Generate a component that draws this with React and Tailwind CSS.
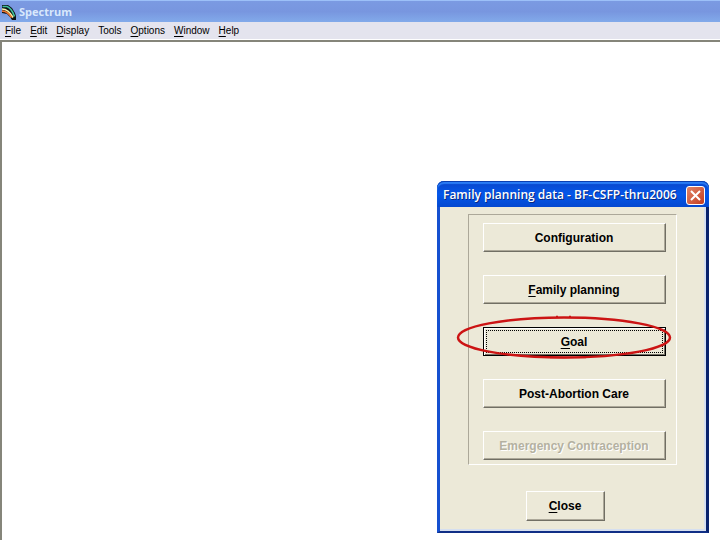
const menus = [
  ['F', 'ile'],
  ['E', 'dit'],
  ['D', 'isplay'],
  ['T', 'ools', true],
  ['O', 'ptions'],
  ['W', 'indow'],
  ['H', 'elp'],
];

const raised =
  "border border-t-white border-l-white border-r-[#716f64] border-b-[#716f64] bg-[#ece9d8] shadow-[inset_-1px_-1px_0_#aca899]";
const label = "font-['Liberation_Sans',Arial,sans-serif] text-[12px] leading-4 font-bold";

function Hot({ first, rest, plain }) {
  return (
    <>
      {plain ? first : <span className="underline underline-offset-2">{first}</span>}
      {rest}
    </>
  );
}

function SpectrumIcon() {
  return (
    <svg width="16" height="16" viewBox="0 0 16 16" fill="none" aria-hidden="true">
      <path d="M1 1H7L11 4L14 9L15 12V16H11L9 13L6 10L1 9Z" fill="#0c1216" />
      <path d="M1.500 2.500H6C10 4 12 8 13.500 12.500" stroke="#3fc09a" strokeWidth="1.7" />
      <path d="M1 5C6 5 9 8 12 13.500" stroke="#f8f4a8" strokeWidth="1.7" />
      <path d="M1 7.200C5 7 8 9.500 10.500 13.500" stroke="#ec7430" strokeWidth="1.7" />
    </svg>
  );
}

function DialogButton({ children, disabled }) {
  return (
    <button
      type="button"
      disabled={disabled}
      className={`${raised} ${label} h-[29px] w-full text-black disabled:text-[#b4b1a1] disabled:[text-shadow:1px_1px_0_#fff]`}
    >
      {children}
    </button>
  );
}

function FamilyPlanningDialog() {
  return (
    <section
      role="dialog"
      aria-labelledby="dialog-title"
      className="absolute top-[181px] right-[11px] flex w-[272px] flex-col rounded-t-[7px] border-x-3 border-b-2 border-l-[#1650d0] border-r-[#08226c] border-b-[#102f86] bg-[#ece9d8]"
    >
      <header className="-mx-[3px] flex h-[26px] items-center justify-between rounded-t-[7px] bg-linear-to-b from-[#0a45c8] via-[#0457ea] to-[#0348d0] pt-0.5 pr-1 pl-1.5 shadow-[inset_0_1px_0_#0b3fb0,inset_0_3px_1px_#2a7cf5]">
        <h1
          id="dialog-title"
          className="font-['Open_Sans','Noto_Sans',sans-serif] text-[12px] leading-4 font-semibold whitespace-nowrap text-white [text-shadow:1px_1px_0_#0a2a80]"
        >
          Family planning data - BF-CSFP-thru2006
        </h1>
        <button
          type="button"
          aria-label="Close window"
          className="flex size-[19px] items-center justify-center rounded-[3px] border border-white bg-linear-to-br from-[#e08468] to-[#c43a1c]"
        >
          <svg width="11" height="11" viewBox="0 0 11 11" aria-hidden="true">
            <path d="M1 1L10 10M10 1L1 10" stroke="#fff" strokeWidth="2" />
          </svg>
        </button>
      </header>
      <div className="flex flex-col items-center border-r-2 border-b-2 border-[#d5dff0] pt-[7px] pb-[8px]">
        <div className="flex w-[209px] flex-col gap-[23px] border border-t-[#aca899] border-r-white border-b-white border-l-[#aca899] pt-2 pr-[10px] pb-1 pl-[14px]">
          <DialogButton>Configuration</DialogButton>
          <DialogButton>
            <Hot first="F" rest="amily planning" />
          </DialogButton>
          <div className="relative">
            <button
              type="button"
              className={`${label} block h-[29px] w-full border border-black bg-[#ece9d8] p-0.5 text-black shadow-[inset_1px_1px_0_#fff,inset_-1px_-1px_0_#716f64]`}
            >
              <span className="flex h-full items-center justify-center border border-dotted border-black">
                <span>
                  <Hot first="G" rest="oal" />
                </span>
              </span>
            </button>
            <svg
              className="pointer-events-none absolute -top-3 -left-[27px]"
              width="216"
              height="45"
              viewBox="0 0 216 45"
              fill="none"
              aria-hidden="true"
            >
              <ellipse cx="108" cy="22.500" rx="106" ry="20" stroke="#cc1414" strokeWidth="2.5" />
              <path d="M100 1.500h2M113 1.500h2M94 42.500h36" stroke="#cc1414" strokeWidth="1.5" />
            </svg>
          </div>
          <DialogButton>Post-Abortion Care</DialogButton>
          <DialogButton disabled>Emergency Contraception</DialogButton>
        </div>
        <button type="button" className={`${raised} ${label} mt-[26px] mr-[14px] h-[30px] w-[79px] text-black`}>
          <Hot first="C" rest="lose" />
        </button>
      </div>
    </section>
  );
}

export default function App() {
  return (
    <div className="relative flex min-h-screen flex-col overflow-hidden bg-white">
      <header className="flex h-[22px] items-center gap-[2px] border-t border-[#9cc0f8] bg-linear-to-b from-[#7b9ae2] via-[#7896df] to-[#82aaea] pl-[1px]">
        <SpectrumIcon />
        <span className="font-['Open_Sans','Noto_Sans',sans-serif] text-[11px] leading-4 font-bold text-[#d8e8fc]">
          Spectrum
        </span>
      </header>
      <nav className="flex h-[18px] items-center gap-[9px] border-b border-white bg-[#e4e4ee] pt-px pl-[5px] font-['Liberation_Sans',Arial,sans-serif] text-[10px] leading-4 text-black">
        {menus.map(([first, rest, plain]) => (
          <button key={first} type="button">
            <Hot first={first} rest={rest} plain={plain} />
          </button>
        ))}
      </nav>
      <main className="grow border-t-2 border-l-2 border-[#85857a] bg-white">
        <FamilyPlanningDialog />
      </main>
    </div>
  );
}
